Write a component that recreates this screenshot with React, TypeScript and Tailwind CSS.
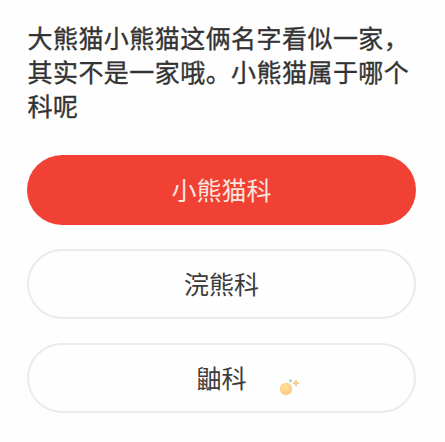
const options = [
  { id: 1, label: '小熊猫科', selected: true },
  { id: 2, label: '浣熊科', selected: false },
  { id: 3, label: '鼬科', selected: false },
];

function Sparkle() {
  return (
    <svg width="24" height="20" viewBox="0 0 24 20" className="absolute left-[249px] top-[32px]">
      <defs>
        <radialGradient id="ball" cx="40%" cy="35%" r="65%">
          <stop offset="0%" stopColor="#ffdf91" />
          <stop offset="100%" stopColor="#ffc98a" />
        </radialGradient>
      </defs>
      <circle cx="8" cy="12" r="6.2" fill="url(#ball)" />
      <circle cx="12.5" cy="3.8" r="1.6" fill="#a3e0b0" />
      <path d="M18 3v6M15 6h6" stroke="#f8cb8e" strokeWidth="2" />
    </svg>
  );
}

export default function App() {
  return (
    <div className="h-[442px] w-[445px] overflow-hidden bg-[#fefefe] pl-[27px] pr-[29px] pt-[20px] font-['Noto_Sans_CJK_SC',sans-serif]">
      <h1 className="h-[135px] whitespace-nowrap pl-[0.5px] text-[25px] leading-[34.2px] tracking-[0.45px] text-[#333] [-webkit-text-stroke:0.35px_#333]">
        大熊猫小熊猫这俩名字看似一家，
        <br />
        其实不是一家哦。小熊猫属于哪个
        <br />
        科呢
      </h1>
      <div className="flex flex-col gap-6">
        {options.map((o) => (
          <button
            key={o.id}
            className={
              o.selected
                ? 'relative h-[70px] w-full rounded-full bg-[#f04134] pb-[2px] text-[25px] leading-none text-[#fbe5df]'
                : 'relative h-[70px] w-full rounded-full border-2 border-[#ebebeb] bg-[#fefefe] pb-[2px] text-[25px] leading-none text-[#3c3c3c]'
            }
          >
            {o.label}
            {o.id === 3 && <Sparkle />}
          </button>
        ))}
      </div>
    </div>
  );
}
